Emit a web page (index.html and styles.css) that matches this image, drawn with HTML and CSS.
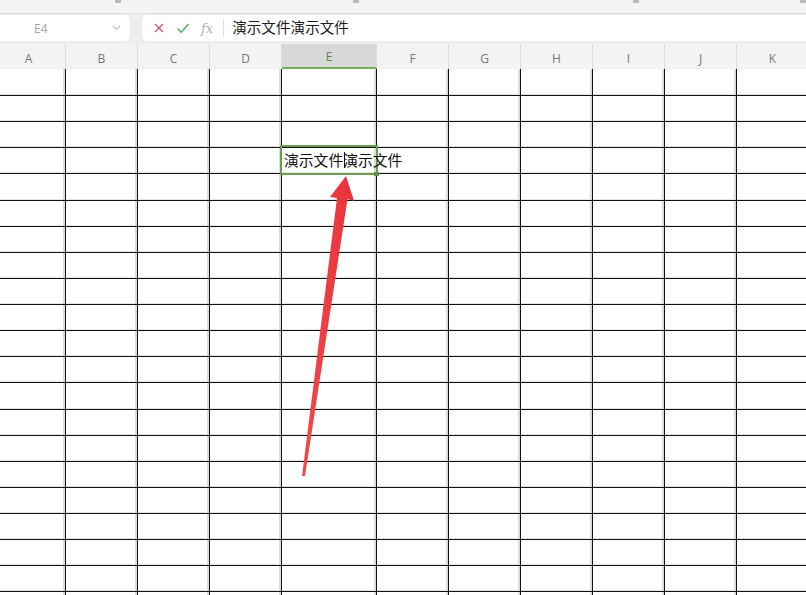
FILE: index.html
```html
<!DOCTYPE html>
<html lang="zh-CN">
<head>
    <meta charset="UTF-8">
    <meta name="viewport" content="width=device-width, initial-scale=1.0">
    <title>演示文件 - 表格</title>
    <link rel="stylesheet" href="styles.css">
</head>
<body>
    <div class="edge">
        <span class="mark m1"></span>
        <span class="mark m2"></span>
        <span class="mark m3"></span>
        <span class="mark m4"></span>
    </div>

    <div class="fbar">
        <div class="namebox">
            <span class="ref">E4</span>
            <svg class="chev" width="9" height="6" viewBox="0 0 9 6"><path d="M1 1l3.5 3.5L8 1" fill="none" stroke="#c4c4c4" stroke-width="1.2"/></svg>
        </div>
        <div class="formula">
            <svg class="btn" width="12" height="12" viewBox="0 0 12 12"><path d="M2 2l8 8M10 2l-8 8" stroke="#d9536b" stroke-width="1.4" fill="none"/></svg>
            <svg class="btn" width="14" height="12" viewBox="0 0 14 12"><path d="M1.5 6.5l3.8 3.8L12.5 2" stroke="#4fa868" stroke-width="1.4" fill="none"/></svg>
            <span class="fx">fx</span>
            <span class="sep"></span>
            <span class="ftext">演示文件演示文件</span>
        </div>
    </div>

    <div class="sheet">
        <div class="heads">
            <div class="head first">A</div>
            <div class="head">B</div>
            <div class="head">C</div>
            <div class="head">D</div>
            <div class="head active">E</div>
            <div class="head">F</div>
            <div class="head">G</div>
            <div class="head">H</div>
            <div class="head">I</div>
            <div class="head">J</div>
            <div class="head">K</div>
        </div>
        <div class="grid" id="grid"></div>

        <div class="selection"><span class="handle"></span></div>
        <span class="caret"></span>
    </div>

    <svg class="arrow" width="806" height="595" viewBox="0 0 806 595">
        <defs>
            <linearGradient id="red" x1="0" y1="0" x2="1" y2="0">
                <stop offset="0" stop-color="#f24a4a"/>
                <stop offset="1" stop-color="#e8303a"/>
            </linearGradient>
        </defs>
        <polygon points="346,176 354,201 347.5,199 305,476 302,476 337,198 330,197" fill="url(#red)"/>
    </svg>

    <script>
        const COLS = 11;
        const ROWS = 21;

        // build the cell grid, E4 holds the typed text
        const grid = document.getElementById('grid');
        let html = '';
        for (let r = 1; r <= ROWS; r++) {
            for (let c = 0; c < COLS; c++) {
                if (r === 4 && c === 4) {
                    html += '<div class="cell"><span class="value">演示文件演示文件</span></div>';
                } else {
                    html += '<div class="cell"></div>';
                }
            }
        }
        grid.innerHTML = html;
    </script>
</body>
</html>
```

FILE: styles.css
```css
body {
    margin: 0;
    width: 806px;
    height: 595px;
    overflow: hidden;
    position: relative;
    background: #ffffff;
    font-family: "Open Sans", "Noto Sans CJK SC", sans-serif;
}
.edge {
    height: 13px;
    background: #f4f4f4;
    border-bottom: 1px solid #dedede;
    position: relative;
}
.mark {
    position: absolute;
    top: 0;
    width: 6px;
    height: 3px;
    background: #b9b9b9;
}
.m1 { left: 115px; }
.m2 { left: 353px; }
.m3 { left: 633px; }
.m4 { left: 800px; }
.fbar {
    height: 30px;
    background: #ededed;
    display: flex;
    align-items: flex-start;
    gap: 12px;
    padding-top: 1px;
    box-sizing: border-box;
}
.namebox {
    width: 136px;
    height: 26px;
    margin-left: -6px;
    background: #ffffff;
    border-radius: 0 5px 5px 0;
    display: flex;
    align-items: center;
    position: relative;
}
.namebox .ref {
    margin-left: 40px;
    font-size: 12px;
    color: #a3a3a3;
}
.namebox .chev {
    position: absolute;
    right: 9px;
    top: 10px;
}
.formula {
    flex: 1;
    height: 26px;
    background: #ffffff;
    border-radius: 5px 0 0 5px;
    display: flex;
    align-items: center;
    padding-left: 11px;
}
.btn {
    margin-right: 11px;
}
.fx {
    font-family: "DejaVu Serif", serif;
    font-style: italic;
    font-size: 13px;
    color: #b0b0b0;
}
.sep {
    width: 1px;
    height: 18px;
    background: #dddddd;
    margin-left: 10px;
    margin-right: 8px;
}
.ftext {
    font-family: "Noto Sans CJK SC", sans-serif;
    font-size: 14.6px;
    color: #1e1e1e;
    margin-bottom: 4px;
}
.sheet {
    position: relative;
}
.heads {
    display: grid;
    grid-template-columns: 66px 72px 72px 72px 95px 72px 72px 72px 72px 72px 72px;
    height: 25px;
    background: #f3f3f3;
}
.head {
    box-sizing: border-box;
    border-right: 1px solid #dcdcdc;
    display: flex;
    align-items: center;
    justify-content: center;
    font-size: 12px;
    color: #777777;
    padding-top: 4px;
}
.head.first {
    padding-right: 8px;
}
.head.active {
    background: #d8d8d8;
    border-bottom: 2px solid #74ad5e;
    color: #5b8a55;
    padding-top: 2px;
}
.grid {
    display: grid;
    grid-template-columns: 66px 72px 72px 72px 95px 72px 72px 72px 72px 72px 72px;
    grid-template-rows: 27px;
    grid-auto-rows: 26.14px;
}
.cell {
    box-sizing: border-box;
    border-right: 1px solid #111111;
    border-bottom: 1px solid #111111;
    box-shadow: inset -2px 0 0 #dcdcdc, inset 0 -1px 0 #e6e6e6;
    position: relative;
}
.value {
    position: absolute;
    left: 2px;
    top: 1px;
    white-space: nowrap;
    font-family: "Noto Sans CJK SC", sans-serif;
    font-size: 14.8px;
    color: #111111;
    z-index: 2;
}
.selection {
    position: absolute;
    left: 280px;
    top: 101px;
    width: 98px;
    height: 30px;
    box-sizing: border-box;
    border: 2px solid #6b9c4f;
    z-index: 1;
}
.handle {
    position: absolute;
    right: -3px;
    bottom: -3px;
    width: 5px;
    height: 4px;
    background: #5d9444;
}
.caret {
    position: absolute;
    left: 344px;
    top: 108px;
    width: 1px;
    height: 16px;
    background: #111111;
    z-index: 3;
}
.arrow {
    position: absolute;
    left: 0;
    top: 0;
    pointer-events: none;
}
```
